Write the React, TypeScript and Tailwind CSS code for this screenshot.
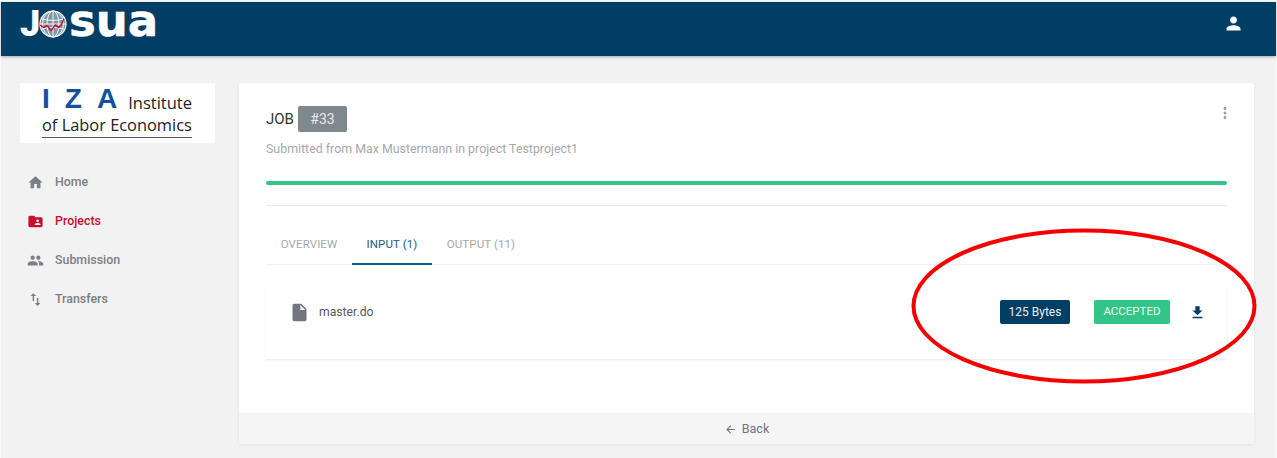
import { MdArrowBack, MdFileDownload, MdFolderShared, MdHome, MdImportExport, MdInsertDriveFile, MdMoreVert, MdPeople, MdPerson } from 'react-icons/md';

const navItems = [
  { label: 'Home', icon: MdHome, active: false },
  { label: 'Projects', icon: MdFolderShared, active: true },
  { label: 'Submission', icon: MdPeople, active: false },
  { label: 'Transfers', icon: MdImportExport, active: false },
];

function Globe() {
  return (
    <svg width="28" height="28" viewBox="0 0 28 28" fill="none" className="shrink-0">
      <circle cx="14" cy="14" r="13" fill="#7d96a8" stroke="#fff" strokeWidth="1.200" />
      <g stroke="#fff" strokeWidth="0.900">
        <ellipse cx="14" cy="14" rx="6" ry="13" />
        <ellipse cx="14" cy="14" rx="10.500" ry="13" />
        <path d="M14 1v26M2 8.500c6 2.500 18 2.500 24 0M1 14h26M2 19.500c6-2.500 18-2.500 24 0" />
      </g>
      <path d="M1 15l4 2.500 3-2 4 5 4.500-5.500 3 2.500 3-3 2.500-6" stroke="#c8102e" strokeWidth="1.400" />
    </svg>
  );
}

function JosuaLogo() {
  return (
    <div className="flex items-start text-white">
      <span className="mt-[-2px] w-[19px] font-['Roboto',sans-serif] text-[36px] leading-[30px] font-black">J</span>
      <span className="mt-[-1px]"><Globe /></span>
      <span className="mt-[-5px] ml-[2px] font-['DejaVu_Sans',sans-serif] text-[45px] leading-[30px] font-bold [-webkit-text-stroke:0.5px_white]">sua</span>
    </div>
  );
}

function IzaLogo() {
  return (
    <div className="flex h-[60px] w-[195px] flex-col items-stretch rounded-[2px] bg-white pt-[4px] pr-[23px] pl-[22px]">
      <div className="flex h-[24px] items-end justify-between font-['Open_Sans',sans-serif] text-[#222]">
        <span className="mr-[-15px] font-['Liberation_Sans',sans-serif] text-[28px] leading-[24px] font-bold tracking-[15px] text-[#14509e]">IZA</span>
        <span className="text-[16.500px] leading-[17px]">Institute</span>
      </div>
      <div className="mt-[3px] font-['Open_Sans',sans-serif] text-[16.400px] leading-[22px] whitespace-nowrap text-[#222]">of Labor Economics</div>
      <div className="mt-[1px] h-[1px] bg-[#555]" />
    </div>
  );
}

export default function App() {
  return (
    <div className="relative h-[458px] w-[1277px] border-x border-t-[2px] border-[#fafafa] bg-[#f2f2f2] font-['Roboto',sans-serif]">
      <header className="flex h-[54px] items-start justify-between bg-[#003e66] pt-[9px] pr-[32px] pl-[19px] shadow-[0_1px_3px_rgba(0,0,0,0.3)]">
        <JosuaLogo />
        <MdPerson className="mt-[2px] text-white" size={21} />
      </header>

      <div className="flex px-[19px] pt-[27px]">
        <aside className="w-[195px] shrink-0">
          <IzaLogo />
          <nav className="mt-[30px] flex flex-col gap-[20px]">
            {navItems.map((item) => (
              <div key={item.label} className={`flex h-[19px] items-center pl-[7px] text-[12.400px] font-medium ${item.active ? 'text-[#c8102e]' : 'text-[#7b8086]'}`}>
                <item.icon size={17} className="shrink-0" />
                <span className="ml-[11px]">{item.label}</span>
              </div>
            ))}
          </nav>
        </aside>

        <main className="ml-[24px] w-[1015px] shrink-0 shadow-[0_1px_3px_rgba(0,0,0,0.08)]">
          <div className="h-[330px] rounded-t-[2px] bg-white px-[27px] pt-[23px]">
            <div className="flex items-start justify-between">
              <div className="flex items-center">
                <span className="text-[15px] leading-[26px] text-[#333]">JOB</span>
                <span className="ml-[4px] flex h-[26px] w-[49px] items-center justify-center rounded-[2px] bg-[#7f878f] text-[14px] text-[#e8eaec]">#33</span>
              </div>
              <MdMoreVert size={18} className="mt-[-2px] mr-[-7px] text-[#9a9fa4]" />
            </div>
            <p className="mt-[9px] text-[12.400px] leading-[16px] text-[#a8a8a8]">Submitted from Max Mustermann in project Testproject1</p>
            <div className="mt-[24px] h-[4px] rounded-full bg-[#32c587]" />
            <div className="mt-[20px] h-px bg-[#ececec]" />
            <div className="mt-[18px] flex h-[41px] border-b border-[#f0f0f0] text-[11.500px] tracking-[0.1px]">
              <div className="flex w-[86px] justify-center pt-[12px] text-[#a8a8a8]">OVERVIEW</div>
              <div className="flex h-[41px] w-[80px] justify-center border-b-[2px] border-[#0f5a8c] pt-[12px] text-[#1d5b86]">INPUT (1)</div>
              <div className="flex w-[98px] justify-center pt-[12px] text-[#a8a8a8]">OUTPUT (11)</div>
            </div>
            <div className="mt-[19px] flex h-[75px] items-start rounded-[2px] pt-[20px] pr-[21px] pl-[23px] shadow-[0_1px_2px_rgba(0,0,0,0.09)]">
              <MdInsertDriveFile size={21} className="mt-[-2px] text-[#73777d]" />
              <span className="ml-[9px] text-[12.200px] leading-[16px] text-[#555a60]">master.do</span>
              <div className="mt-[-4px] ml-auto flex items-center">
                <span className="flex h-[24px] w-[70px] items-center justify-center rounded-[2px] bg-[#003e66] text-[12px] text-[#e6edf2]">125 Bytes</span>
                <span className="ml-[24px] flex h-[24px] w-[76px] items-center justify-center rounded-[2px] bg-[#32c587] text-[11.500px] text-[#eafaf3]">ACCEPTED</span>
                <MdFileDownload size={17} className="ml-[19px] text-[#003e66]" />
              </div>
            </div>
          </div>
          <div className="flex h-[31px] items-center justify-center gap-[5px] bg-[#f5f5f5] pt-[2px] text-[12.500px] text-[#6f757b]">
            <MdArrowBack size={13} />
            <span>Back</span>
          </div>
        </main>
      </div>

      {/* hand-drawn highlight over the screenshot */}
      <svg className="pointer-events-none absolute top-[224px] left-[907px]" width="350" height="160" viewBox="0 0 350 160" fill="none">
        <ellipse cx="176" cy="80" rx="170.500" ry="75.500" stroke="#f50000" strokeWidth="4" />
      </svg>
    </div>
  );
}
